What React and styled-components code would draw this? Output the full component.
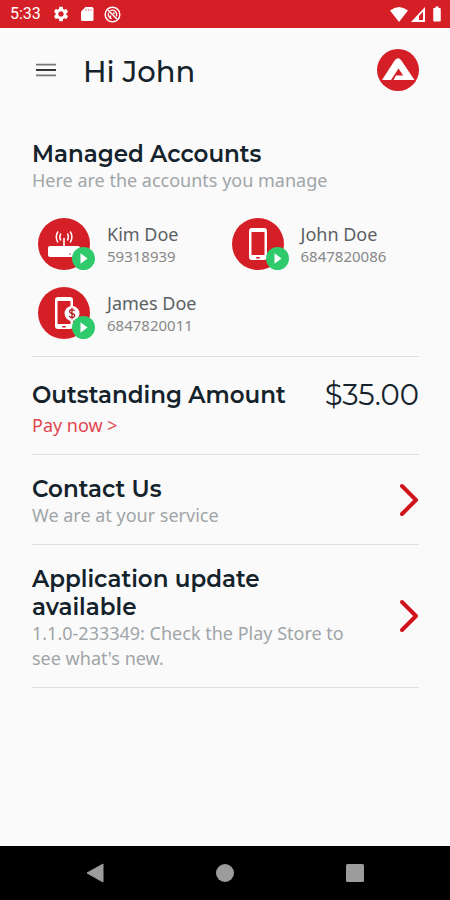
import styled, { createGlobalStyle } from 'styled-components';
import { MdSettings, MdBatteryFull } from 'react-icons/md';

const GlobalStyle = createGlobalStyle`
  * { box-sizing: border-box; }
  body {
    margin: 0;
    background: #fafafa;
    font-family: 'Noto Sans', 'Open Sans', sans-serif;
  }
  h1, h2, p, ul { margin: 0; padding: 0; }
`

const Screen = styled.div`
  display: flex;
  flex-direction: column;
  min-height: 100vh;
`

const StatusBar = styled.div`
  display: flex;
  align-items: center;
  justify-content: space-between;
  height: 28px;
  padding: 0 4px 0 10px;
  background: #d51f27;
  color: #fff;
  font: 400 16px/28px Roboto, sans-serif;
`

const StatusGroup = styled.div`
  display: flex;
  align-items: center;
  gap: ${props => props.$gap}px;
`

const Header = styled.header`
  display: flex;
  align-items: center;
  height: 84px;
  padding: 0 31px 0 32px;
`

const MenuButton = styled.button`
  display: flex;
  width: 28px;
  padding: 4px;
  border: 0;
  background: none;
`

const Title = styled.h1`
  flex: 1;
  padding: 4px 0 0 23px;
  color: #14232b;
  font: 500 29px/36px Montserrat, Inter, sans-serif;
`

const Main = styled.main`
  flex: 1;
  padding: 0 31px 0 32px;
`

const Section = styled.section`
  display: flex;
  justify-content: space-between;
  align-items: ${props => props.$align || 'center'};
  padding: ${props => props.$top || 20}px 0 16px;
  border-bottom: 1px solid #dedfe0;
`

const Accounts = styled.section`
  padding: 28px 0 17px;
  border-bottom: 1px solid #dedfe0;
`

const Heading = styled.h2`
  color: #14232b;
  font: 600 23px/28px Montserrat, Inter, sans-serif;
`

const Note = styled.p`
  color: #a0a5a8;
  font-size: 18px;
  line-height: 25px;
`

const TextBlock = styled.div`
  max-width: 332px;
`

const NarrowHeading = styled(Heading)`
  max-width: 280px;
`

const AccountList = styled.ul`
  display: grid;
  grid-template-columns: 1fr 1fr;
  row-gap: 17px;
  padding-top: 25px;
  list-style: none;
`

const Account = styled.li`
  display: flex;
  gap: 17px;
  padding-left: 6px;
`

const Avatar = styled.div`
  position: relative;
  width: 52px;
  height: 52px;
  border-radius: 50%;
  background: #d51f27;
`

const Badge = styled.svg`
  position: absolute;
  right: -5px;
  bottom: 0;
`

const AccountName = styled.p`
  padding-top: 4px;
  color: #5a6064;
  font-size: 18px;
  line-height: 25px;
`

const AccountNumber = styled.p`
  color: #888;
  font-size: 15px;
  line-height: 19px;
`

const Amount = styled.p`
  color: #14232b;
  font: 400 29px/28px Montserrat, Inter, sans-serif;
`

const PayLink = styled.a`
  display: block;
  padding-top: 4px;
  color: #e04650;
  font-size: 18px;
  line-height: 25px;
  text-decoration: none;
`

const ArrowButton = styled.button`
  display: flex;
  padding: 0 0 4px;
  border: 0;
  background: none;
`

const NavBar = styled.nav`
  display: grid;
  grid-template-columns: repeat(3, 130px);
  justify-content: center;
  height: 54px;
  background: #000;
`

const NavButton = styled.button`
  display: flex;
  align-items: center;
  justify-content: center;
  padding: 0;
  border: 0;
  background: none;
`

const accounts = [
  { name: 'Kim Doe', number: '59318939', icon: 'router' },
  { name: 'John Doe', number: '6847820086', icon: 'phone' },
  { name: 'James Doe', number: '6847820011', icon: 'prepaid' },
];

function Phone() {
  return (
    <g>
      <rect x="17" y="10" width="18" height="32" rx="3" fill="#fff" />
      <rect x="19.5" y="14" width="13" height="23" fill="#d51f27" />
      <rect x="24" y="39" width="4" height="1.4" rx=".7" fill="#d51f27" />
    </g>
  )
}

function AccountIcon({ type }) {
  return (
    <svg width="52" height="52" viewBox="0 0 52 52" aria-hidden="true">
      {type == 'router' ? (
        <g>
          <rect x="10" y="28" width="32" height="11" rx="2" fill="#fff" />
          <path d="M26 29V20" stroke="#fff" strokeWidth="1.6" />
          <g fill="none" stroke="#fff" strokeWidth="1.5">
            <path d="M22.8 15.5q-2 3.5 0 7M29.4 15.5q2 3.5 0 7" />
            <path d="M20 13.5q-3.4 5.5 0 11M32.2 13.5q3.4 5.5 0 11" />
          </g>
          <circle cx="32" cy="36" r=".7" fill="#d51f27" />
        </g>
      ) : <Phone />}
      {type == 'prepaid' ? (
        <g>
          <circle cx="34" cy="26.5" r="7.5" fill="#fff" />
          <path d="M36.7 23.8q-1-1.4-3-1.2-2.2.3-2.1 2 .1 1.4 2.4 1.9 2.7.5 2.6 2.2-.2 1.8-2.5 1.8-2 0-3-1.4M34 20.8v11.4" fill="none" stroke="#b51d23" strokeWidth="1.3" />
        </g>
      ) : null}
    </svg>
  )
}

function Arrow() {
  return (
    <svg width="20" height="34" viewBox="0 0 20 34" aria-hidden="true">
      <path d="M3 3l14 14L3 31" fill="none" stroke="#cf151b" strokeWidth="4" strokeLinecap="round" strokeLinejoin="round" />
    </svg>
  )
}

function App() {
  return (
    <Screen>
      <GlobalStyle />
      <StatusBar>
        <StatusGroup $gap={11}>
          <span>5:33</span>
          <StatusGroup $gap={9}>
            <MdSettings size={18} />
            <svg width="16" height="16" viewBox="0 0 16 16">
              <path d="M6.5 1H13q1.5 0 1.5 1.5v11q0 1.5-1.5 1.5H3.5Q2 15 2 13.5v-8z" fill="#fff" />
              <path d="M7 3v2M9.5 3v2M12 3v2" stroke="#e9898d" />
            </svg>
            <svg width="17" height="17" viewBox="0 0 17 17" fill="none" stroke="#fff">
              <circle cx="8.5" cy="8.5" r="7.3" strokeWidth="1.5" />
              <path d="M4 4l9 9" strokeWidth="1.5" />
              <path d="M6.5 4.7a4.3 4.3 0 0 1 5.8 5.6M4.7 6.8a4.3 4.3 0 0 0 3 5.9M6.5 9.5v2.6M9 6.7a2 2 0 0 1 1.3 1.5" strokeWidth="1.3" />
            </svg>
          </StatusGroup>
        </StatusGroup>
        <StatusGroup $gap={3}>
          <svg width="18" height="15" viewBox="0 0 18 15">
            <path d="M0 3.6Q9-3.4 18 3.6L9 15z" fill="#fff" />
          </svg>
          <svg width="14" height="15" viewBox="0 0 14 15">
            <path d="M0 15L14 0v15z" fill="#fff" />
            <path d="M8 13V9l4-4.3V13z" fill="#d51f27" />
          </svg>
          <MdBatteryFull size={18} />
        </StatusGroup>
      </StatusBar>
      <Header>
        <MenuButton aria-label="Menu">
          <svg width="22" height="16" viewBox="0 0 22 16">
            <path d="M0 2h22M0 14h22" stroke="#777" strokeWidth="2" />
            <path d="M0 8h22" stroke="#222" strokeWidth="2" />
          </svg>
        </MenuButton>
        <Title>Hi John</Title>
        <svg width="42" height="42" viewBox="0 0 42 42" role="img" aria-label="Logo">
          <circle cx="21" cy="21" r="21" fill="#d51f27" />
          <path d="M5 31L17.6 11.4Q21 7 24.4 11.4L37.5 31H16.5L19 26.5h7.2L21.5 19.5L14 31z" fill="#fff" />
        </svg>
      </Header>
      <Main>
        <Accounts>
          <Heading>Managed Accounts</Heading>
          <Note>Here are the accounts you manage</Note>
          <AccountList>
            {accounts.map(a => (
              <Account key={a.name}>
                <Avatar>
                  <AccountIcon type={a.icon} />
                  <Badge width="23" height="23" viewBox="0 0 23 23" aria-hidden="true">
                    <circle cx="11.5" cy="11.5" r="11.5" fill="#2fca6c" />
                    <path d="M8.5 6.3v10.4l7-5.2z" fill="#fff" />
                  </Badge>
                </Avatar>
                <div>
                  <AccountName>{a.name}</AccountName>
                  <AccountNumber>{a.number}</AccountNumber>
                </div>
              </Account>
            ))}
          </AccountList>
        </Accounts>
        <Section $align="flex-start" $top={24}>
          <div>
            <Heading>Outstanding Amount</Heading>
            <PayLink href="#pay">Pay now &gt;</PayLink>
          </div>
          <Amount>$35.00</Amount>
        </Section>
        <Section>
          <TextBlock>
            <Heading>Contact Us</Heading>
            <Note>We are at your service</Note>
          </TextBlock>
          <ArrowButton aria-label="Contact us"><Arrow /></ArrowButton>
        </Section>
        <Section>
          <TextBlock>
            <NarrowHeading>Application update available</NarrowHeading>
            <Note>1.1.0-233349: Check the Play Store to see what's new.</Note>
          </TextBlock>
          <ArrowButton aria-label="Update application"><Arrow /></ArrowButton>
        </Section>
      </Main>
      <NavBar>
        <NavButton aria-label="Back">
          <svg width="18" height="20" viewBox="0 0 18 20"><path d="M1 10L17 1v18z" fill="#9c9c9c" stroke="#9c9c9c" strokeLinejoin="round" /></svg>
        </NavButton>
        <NavButton aria-label="Home">
          <svg width="18" height="18" viewBox="0 0 18 18"><circle cx="9" cy="9" r="9" fill="#9c9c9c" /></svg>
        </NavButton>
        <NavButton aria-label="Recent apps">
          <svg width="18" height="18" viewBox="0 0 18 18"><rect width="18" height="18" rx="1.5" fill="#9c9c9c" /></svg>
        </NavButton>
      </NavBar>
    </Screen>
  )
}

export default App;
